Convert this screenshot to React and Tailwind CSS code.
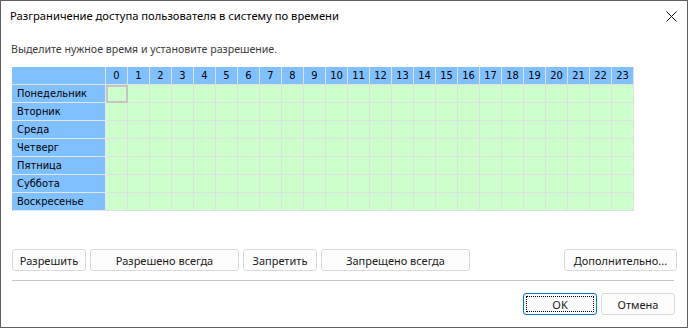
import React from 'react'

const days = ['Понедельник', 'Вторник', 'Среда', 'Четверг', 'Пятница', 'Суббота', 'Воскресенье']
const hours = Array.from({ length: 24 }, (_, i) => i)

function Btn({ children, className = '' }) {
  return (
    <button
      className={`h-[22px] rounded-[3px] border border-[#d9d9d9] bg-[#fdfdfd] text-[11px] leading-none text-[#1a1a1a] ${className}`}
    >
      {children}
    </button>
  )
}

export default function App() {
  return (
    <div
      className="w-[688px] h-[328px] border border-[#5f5f5f] bg-white flex flex-col"
      style={{ fontFamily: '"Noto Sans", "Open Sans", sans-serif' }}
    >
      {/* title bar */}
      <div className="h-[30px] flex items-center justify-between pl-[9px] pr-[10px]">
        <span className="text-[11.2px] text-black">Разграничение доступа пользователя в систему по времени</span>
        <svg width="11" height="11" viewBox="0 0 11 11">
          <path d="M0.5 0.5 L10.5 10.5 M10.5 0.5 L0.5 10.5" stroke="#111" strokeWidth="1" />
        </svg>
      </div>

      <div className="mt-[10px] h-4 leading-4 pl-[10px] text-[10.6px] text-[#3a3a3a]">
        Выделите нужное время и установите разрешение.
      </div>

      {/* schedule grid */}
      <div
        className="mt-[10px] ml-[11px] grid grid-cols-[94px_repeat(24,22px)] auto-rows-[18px] w-fit text-[11px] text-black"
        style={{ fontFamily: '"DejaVu Sans Condensed", "Liberation Sans", sans-serif' }}
      >
        <div className="bg-[#80c0ff] border-r border-b border-[#e0e0e0]" />
        {hours.map((h) => (
          <div
            key={h}
            className="bg-[#80c0ff] border-r border-b border-[#e0e0e0] flex items-center justify-center leading-none"
          >
            {h}
          </div>
        ))}
        {days.map((d, r) => (
          <React.Fragment key={d}>
            <div className="bg-[#80c0ff] border-r border-b border-[#e0e6f0] flex items-center pl-[5px] leading-none">
              {d}
            </div>
            {hours.map((h) => (
              <div
                key={h}
                className={`bg-[#ccffcc] border-r border-b border-[#e0e0e0] ${
                  r === 0 && h === 0 ? 'outline-2 -outline-offset-2 outline-[#c4c4c4]' : ''
                }`}
              />
            ))}
          </React.Fragment>
        ))}
      </div>

      {/* action buttons */}
      <div className="mt-[38px] flex gap-1 pl-[11px] pr-[10px]">
        <Btn className="w-[74px]">Разрешить</Btn>
        <Btn className="w-[149px]">Разрешено всегда</Btn>
        <Btn className="w-[74px]">Запретить</Btn>
        <Btn className="w-[149px]">Запрещено всегда</Btn>
        <Btn className="w-[113px] ml-auto">Дополнительно...</Btn>
      </div>

      <div className="mt-[9px] ml-[11px] mr-[13px] h-px bg-[#c8c8c8]" />

      <div className="mt-[12px] flex justify-end gap-1 pr-[12px]">
        <button className="w-[74px] h-[22px] rounded-[3px] border border-[#0078d7] bg-[#fdfdfd] p-[2px]">
          <span className="flex h-full items-center justify-center border border-dotted border-black text-[11px] leading-none text-[#1a1a1a]">
            OK
          </span>
        </button>
        <Btn className="w-[74px]">Отмена</Btn>
      </div>
    </div>
  )
}
